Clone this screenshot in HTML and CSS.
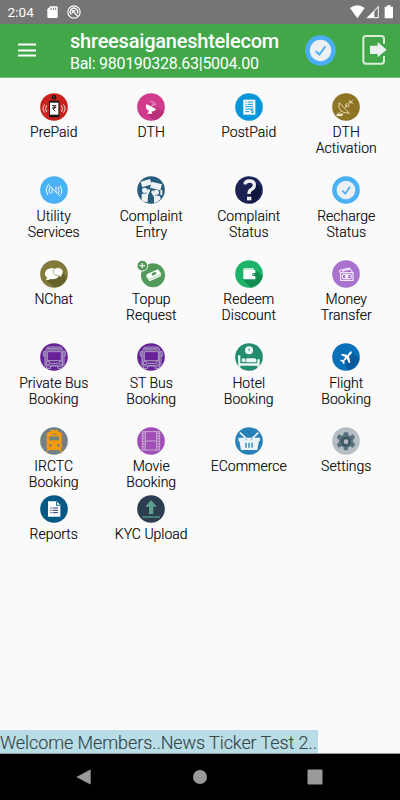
FILE: index.html
```html
<!DOCTYPE html>
<html lang="en">
<head>
<meta charset="utf-8">
<title>shreesaiganeshtelecom</title>
<link rel="stylesheet" href="styles.css">
</head>
<body>
<div class="screen">
  <div class="status">
    <span class="clock">2:04</span>
    <svg class="sd" viewBox="0 0 36 42"><path d="M10 1H29Q32 1 32 4V33Q32 36 29 36H4Q1 36 1 33V10Z" fill="#fff"/><path d="M12 5v7M19 5v7M26 5v7" stroke="#757575" stroke-width="3"/></svg>
    <svg class="sync" viewBox="0 0 42 42"><g fill="none" stroke="#fff"><circle cx="21" cy="21" r="18.500" stroke-width="3.500"/><path d="M13 28A11 11 0 1 1 31 25" stroke-width="4"/><path d="M17 17L32 34M17 25V17H25" stroke-width="3.500"/></g></svg>
    <span class="spacer"></span>
    <svg class="signals" viewBox="0 0 132 42"><path d="M0 9Q22-7 44 9L22 40Z" fill="#fff"/><path d="M85 5V38H53Z" fill="none" stroke="#e4e4e4" stroke-width="3.500"/><path d="M73 17V38H51Z" fill="#fff"/><path d="M104 5h7V1h11v4h7v35h-25Z" fill="#fff"/></svg>
  </div>
  <header class="bar">
    <svg class="menu" viewBox="0 0 54 42"><path d="M0 4.500h54M0 22.500h54M0 37.500h54" stroke="#fff" stroke-width="6"/></svg>
    <div class="titles">
      <div class="title">shreesaiganeshtelecom</div>
      <div class="balance">Bal: 980190328.63|5004.00</div>
    </div>
    <svg class="check" viewBox="0 0 84 84"><circle cx="42" cy="42" r="41.500" fill="#49aff2"/><circle cx="42" cy="42" r="29" fill="#edf0f2"/><path d="M29 44l10 9 16-22" fill="none" stroke="#49aff2" stroke-width="5"/></svg>
    <svg class="exit" viewBox="0 0 75 90"><path d="M66 26V11Q66 3 58 3H12Q4 3 4 11V78Q4 86 12 86H58Q66 86 66 78V63" fill="none" stroke="#d8eed8" stroke-width="6"/><path d="M24 32H47V21L74 44 47 67V57H24Z" fill="#edf0f2"/></svg>
  </header>
  <main class="grid">
    <div class="item"><svg viewBox="0 0 84 84"><circle cx="42" cy="42" r="41.500" fill="#c9211c"/><circle cx="42" cy="13" r="7" fill="#141414"/><path d="M42 9v8" stroke="#777" stroke-width="2"/><rect x="27" y="23" width="31" height="50" rx="4" fill="#151515"/><path d="M30 29h25v36H30z" fill="#fff"/><path d="M37 38h12M37 44h12M38 38q9 0 8 5 0 4-8 4l8 8" fill="none" stroke="#111" stroke-width="2.500"/><path d="M20 37q-7 10 0 20M14 34q-10 13 0 25M64 37q7 10 0 20M70 34q10 13 0 25" fill="none" stroke="#fff" stroke-width="2.500"/></svg><span>PrePaid</span></div>
    <div class="item"><svg viewBox="0 0 84 84"><circle cx="42" cy="42" r="41.500" fill="#d23a8c"/><path d="M57 46L81 56Q74 76 51 82L31 62Z" fill="#b92f7a"/><path d="M28 33Q23 48 36 54L31 62H46L43 56Q52 56 58 49Z" fill="#fff"/><path d="M42 41l7-7" stroke="#fff" stroke-width="3"/><path d="M44 29q9 0 9 9M39 25q16-3 18 13" fill="none" stroke="#efb3d3" stroke-width="2"/></svg><span>DTH</span></div>
    <div class="item"><svg viewBox="0 0 84 84"><circle cx="42" cy="42" r="41.500" fill="#0796d7"/><path d="M25 20H61V65H25Z" fill="#fff"/><path d="M31 27h4M38 27h16M31 34h4M38 34h16M31 41h24M31 48h24M31 56h11" stroke="#0796d7" stroke-width="3"/><path d="M55 49h-6v5h6v5h-7" fill="none" stroke="#0796d7" stroke-width="2.500"/></svg><span>PostPaid</span></div>
    <div class="item"><svg viewBox="0 0 84 84"><circle cx="42" cy="42" r="41.500" fill="#8d7524"/><g fill="none" stroke="#eee3c4" stroke-width="2.500"><path d="M22 29Q13 59 52 61ZM38 44l7-8M25 56l-10 12H30l2-8"/><circle cx="46" cy="37" r="5"/><path d="M51 23l12 9M62 21L53 33M53 24l-2 6"/></g><path d="M15 62h16v7H13z" fill="#eee3c4"/></svg><span>DTH<br>Activation</span></div>

    <div class="item"><svg viewBox="0 0 84 84"><circle cx="42" cy="42" r="41.500" fill="#49b1f5"/><g fill="none" stroke="#f2faff" stroke-width="3"><path d="M24 25L61 61M30 33q-6 10 0 20M23 28q-9 14 0 29M54 33q6 10 1 18M60 28q9 14 3 27M36 37v16M48 32v17"/></g></svg><span>Utility<br>Services</span></div>
    <div class="item"><svg viewBox="0 0 84 84"><circle cx="42" cy="42" r="41.500" fill="#285b7c"/><g fill="#edf3f6"><path d="M11 17L39 9 45 25 16 34Z"/><path d="M44 17L75 25 70 43 39 35Z"/><circle cx="23" cy="43" r="8"/><circle cx="58" cy="49" r="8"/><path d="M14 73V56Q15 51 27 53L33 38 40 42 33 58 32 79Q22 79 14 73ZM51 81L51 63 42 48 48 42 56 59H65Q71 59 71 69 63 79 51 81Z"/><path d="M70 42h6v15h-6z"/></g></svg><span>Complaint<br>Entry</span></div>
    <div class="item"><svg viewBox="0 0 84 84"><circle cx="42" cy="42" r="41.500" fill="#1b2355"/><path d="M52 10L79 39Q77 72 46 82L34 71Z" fill="#10173f"/><path d="M30 25Q31 15 43 15 58 15 58 27 58 36 48 41 42 45 42 54" fill="none" stroke="#f2f2f3" stroke-width="10"/><path d="M36 62h13v11H36z" fill="#f2f2f3"/></svg><span>Complaint<br>Status</span></div>
    <div class="item"><svg viewBox="0 0 84 84"><circle cx="42" cy="42" r="41.500" fill="#49b1f5"/><circle cx="42" cy="42" r="28" fill="#edf0f2"/><path d="M31 44l9 9 14-21" fill="none" stroke="#49aff2" stroke-width="5"/></svg><span>Recharge<br>Status</span></div>

    <div class="item"><svg viewBox="0 0 84 84"><circle cx="42" cy="42" r="41.500" fill="#817a3a"/><path d="M69 36L80 56Q67 78 45 82L17 61Z" fill="#66602a"/><path d="M36 25C22 25 15 33 15 42Q15 50 22 54L17 61Q26 61 31 57C48 60 59 51 58 42 57 31 48 25 36 25Z" fill="#fff"/><path d="M53 23C64 23 69 29 69 36Q69 43 64 46L67 51Q60 50 56 47C45 47 39 42 40 35 40 27 46 23 53 23Z" fill="#fff" stroke="#817a3a" stroke-width="2"/></svg><span>NChat</span></div>
    <div class="item"><svg viewBox="0 0 84 84"><circle cx="48" cy="46" r="36" fill="#529a59"/><path d="M29 43L63 28 73 41 71 49 38 64 28 51Z" fill="#fff"/><path d="M29 49l10 9 33-15" fill="none" stroke="#529a59" stroke-width="1.500"/><ellipse cx="51" cy="41" rx="8" ry="4" fill="#529a59" transform="rotate(-24 51 41)"/><circle cx="16" cy="17" r="16" fill="#4f9556" stroke="#fafafa" stroke-width="3"/><path d="M16 9v16M8 17h16" stroke="#fff" stroke-width="3.500"/></svg><span>Topup<br>Request</span></div>
    <div class="item"><svg viewBox="0 0 84 84"><circle cx="42" cy="42" r="41.500" fill="#1db46a"/><path d="M61 30L83 47Q79 75 48 83L25 59Z" fill="#128e50"/><path d="M25 28Q25 25 29 25H56V30H61V58H29Q25 58 25 54Z" fill="#fff"/><path d="M28 29h28" stroke="#8dceb0" stroke-width="2"/><path d="M52 39h11v9H52z" fill="#148e51"/><circle cx="55" cy="43" r="2" fill="#fff"/></svg><span>Redeem<br>Discount</span></div>
    <div class="item"><svg viewBox="0 0 84 84"><circle cx="42" cy="42" r="41.500" fill="#aa72cf"/><g fill="none" stroke="#fff" stroke-width="3"><path d="M23 38V31L53 24 61 36M30 34l24-7"/><rect x="26" y="38" width="37" height="23"/><rect x="31" y="43" width="27" height="13" rx="5"/></g><circle cx="44" cy="49" r="5" fill="#fff"/></svg><span>Money<br>Transfer</span></div>

    <div class="item"><svg viewBox="0 0 84 84"><circle cx="42" cy="42" r="41.500" fill="#672299"/><g fill="none" stroke="#aaa0bf" stroke-width="3"><path d="M18 69V22Q18 12 29 12H57Q68 12 68 22V69Z"/><path d="M23 17h39M19 21h48M22 26h42v27H22zM16 26h-6v13h6M70 26h6v13h-6M15 24v45M72 24v45M31 61h24M31 67h24"/><circle cx="24" cy="60" r="5"/><circle cx="62" cy="60" r="5"/><path d="M19 70v6h13v-7M54 69v7h13v-6"/></g></svg><span>Private Bus<br>Booking</span></div>
    <div class="item"><svg viewBox="0 0 84 84"><circle cx="42" cy="42" r="41.500" fill="#672299"/><g fill="none" stroke="#aaa0bf" stroke-width="3"><path d="M18 69V22Q18 12 29 12H57Q68 12 68 22V69Z"/><path d="M23 17h39M19 21h48M22 26h42v27H22zM16 26h-6v13h6M70 26h6v13h-6M15 24v45M72 24v45M31 61h24M31 67h24"/><circle cx="24" cy="60" r="5"/><circle cx="62" cy="60" r="5"/><path d="M19 70v6h13v-7M54 69v7h13v-6"/></g></svg><span>ST Bus<br>Booking</span></div>
    <div class="item"><svg viewBox="0 0 84 84"><circle cx="42" cy="42" r="41.500" fill="#228b70"/><circle cx="42" cy="22" r="12" fill="#eef6f3"/><path d="M42 16v7h2" fill="none" stroke="#228b70" stroke-width="2.500"/><circle cx="26" cy="52" r="6" fill="#eef6f3"/><path d="M34 46H59Q64 46 64 52V58H34ZM9 37H16V61H67V49H74V74H67V68H16V74L10 70Z" fill="#eef6f3"/></svg><span>Hotel<br>Booking</span></div>
    <div class="item"><svg viewBox="0 0 84 84"><circle cx="42" cy="42" r="41.500" fill="#0a70b8"/><path d="M59 26L82 48Q76 77 50 82L34 57Z" fill="#075b9c"/><path d="M57 25Q61 27 59 31L51 40 55 58 51 61 44 47 37 54 38 61 35 64 31 57 24 53 27 50 34 51 40 43 27 36 30 32 47 36Q54 25 57 25Z" fill="#fff"/></svg><span>Flight<br>Booking</span></div>

    <div class="item short"><svg viewBox="0 0 84 84"><circle cx="42" cy="42" r="41.500" fill="#728183"/><path d="M31 9H54V15H60Q65 16 65 22V60Q65 69 57 69H27Q20 69 20 60V22Q20 16 26 15H31Z" fill="#f59a0d"/><path d="M28 28H57V40H28Z" fill="#728183"/><path d="M36 22h14" stroke="#728183" stroke-width="3"/><circle cx="31" cy="55" r="4" fill="#728183"/><circle cx="55" cy="55" r="4" fill="#728183"/><path d="M26 68l-7 8M59 68l7 8" stroke="#f59a0d" stroke-width="4"/></svg><span>IRCTC<br>Booking</span></div>
    <div class="item short"><svg viewBox="0 0 84 84"><circle cx="42" cy="42" r="41.500" fill="#a14db8"/><g fill="none" stroke="#c6adce"><path d="M16 14h52v55H16zM25 14v55M59 14v55M26 42h32" stroke-width="3"/><path d="M20 17v50M64 17v50" stroke-width="6" stroke-dasharray="4 4"/></g></svg><span>Movie<br>Booking</span></div>
    <div class="item short"><svg viewBox="0 0 84 84"><circle cx="42" cy="42" r="41.500" fill="#2781b9"/><path d="M10 32H75V42H72L67 69H18L13 42H10Z" fill="#edf4f8"/><path d="M15 17l19 18M70 17L51 35" stroke="#edf4f8" stroke-width="5"/><path d="M33 47v15M42 47v15M51 47v15" stroke="#2781b9" stroke-width="4"/><path d="M32 34l4 6M52 34l-4 6" stroke="#2781b9" stroke-width="2"/></svg><span>ECommerce</span></div>
    <div class="item short"><svg viewBox="0 0 84 84"><circle cx="42" cy="42" r="41.500" fill="#b6bec3"/><path d="M36 16H48L50 25 54 27 63 22 69 32 63 38V46L70 52 63 62 54 58 49 61 47 70H36L34 60 29 57 20 62 14 52 21 46V38L14 32 20 22 29 26 34 23Z" fill="#57717f"/><circle cx="42" cy="44" r="15" fill="#405661"/><circle cx="42" cy="44" r="7" fill="#b6bec3"/></svg><span>Settings</span></div>

    <div class="item short"><svg viewBox="0 0 84 84"><circle cx="42" cy="42" r="41.500" fill="#075985"/><path d="M24 19H50L61 30V65H24Z" fill="#fff"/><path d="M50 20v11h10" fill="none" stroke="#075985" stroke-width="3"/><path d="M31 39h4M38 39h16M31 46h4M38 46h16M31 53h4M38 53h16" stroke="#26386e" stroke-width="3"/></svg><span>Reports</span></div>
    <div class="item short"><svg viewBox="0 0 84 84"><circle cx="42" cy="42" r="41.500" fill="#2c3e50"/><path d="M42 15L59 35H49V57H36V35H25Z" fill="#5da08f"/><path d="M16 66H69" stroke="#4d887e" stroke-width="5"/></svg><span>KYC Upload</span></div>
  </main>
  <div class="ticker"><span>Welcome Members..News Ticker Test 2..</span></div>
  <nav class="nav">
    <svg viewBox="0 0 48 48"><path d="M1 24L42 2Q44 1 44 4V44Q44 47 42 46Z" fill="#9a9a9a"/></svg>
    <svg viewBox="0 0 48 48"><circle cx="24" cy="24" r="21" fill="#9a9a9a"/></svg>
    <svg viewBox="0 0 48 48"><rect x="1.500" y="1.500" width="45" height="45" rx="3" fill="#9a9a9a"/></svg>
  </nav>
</div>
</body>
</html>
```
FILE: styles.css
```css
* { box-sizing: border-box; }
body { margin: 0; font-family: Roboto, sans-serif; background: #fafafa; }
svg { display: block; flex: none; }
.screen { width: 400px; height: 800px; display: flex; flex-direction: column; overflow: hidden; }
.status { height: 23.5px; flex: none; background: #757575; display: flex; align-items: center; padding: 1px 6px 0 7.5px; color: #fff; }
.clock { font-size: 13.5px; width: 39px; letter-spacing: .1px; }
.sd { width: 12px; height: 14px; margin-top: 1px; }
.sync { width: 14px; height: 14px; margin-left: 8px; }
.spacer { flex: 1; }
.signals { width: 44px; height: 14px; }
.bar { height: 54.5px; flex: none; background: #41a748; border-bottom: 1px solid #79bd7d; display: flex; align-items: center; padding: 0 13px 0 18px; color: #fff; }
.menu { width: 18px; height: 14px; margin-right: 34px; }
.titles { width: 235px; white-space: nowrap; padding-top: 3px; }
.title { font-size: 20px; font-weight: 500; line-height: 24px; letter-spacing: -.22px; }
.balance { font-size: 16px; line-height: 22px; letter-spacing: -.28px; }
.check { width: 31px; height: 31px; }
.exit { width: 25px; height: 30px; margin-left: 26px; }
.grid { flex: 1; padding: 14.5px 5px 0; display: grid; grid-template-columns: repeat(4, 97.5px); align-content: start; }
.item { height: 83.5px; display: flex; flex-direction: column; align-items: center; text-align: center; font-size: 14px; font-weight: 300; line-height: 16px; letter-spacing: 0; color: #000; -webkit-text-stroke: .15px #000; }
.item.short { height: 68px; }
.item svg { width: 28px; height: 28px; margin-bottom: 3.5px; }
.ticker { height: 24px; flex: none; display: flex; border-bottom: 1px solid #8f9a9b; }
.ticker span { width: 317.5px; background: #b8dde6; color: #37474b; font-size: 18px; font-weight: 300; line-height: 25px; letter-spacing: -.09px; white-space: nowrap; -webkit-text-stroke: .15px #37474b; }
.nav { height: 46px; flex: none; background: #000; display: flex; align-items: center; justify-content: space-between; padding: 0 77px 0 76px; }
.nav svg { width: 16px; height: 16px; }
```
